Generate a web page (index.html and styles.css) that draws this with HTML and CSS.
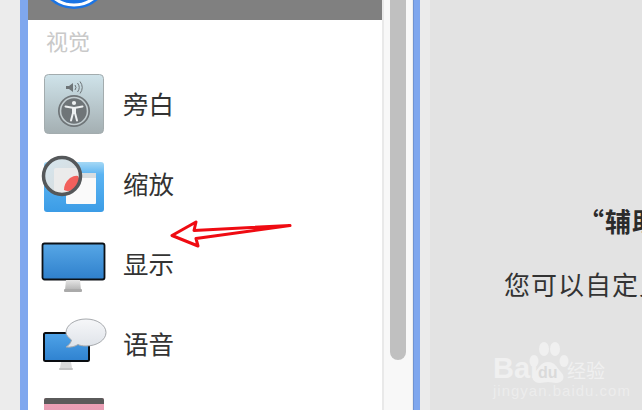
FILE: index.html
```html
<!DOCTYPE html>
<html lang="zh-CN">
<head>
<meta charset="utf-8">
<title>辅助功能</title>
<link rel="stylesheet" href="styles.css">
</head>
<body>
<div class="window">
  <div class="gutter"></div>
  <div class="edge edge-left"></div>
  <div class="list">
    <div class="selected">
      <svg class="selected-icon" width="66" height="20" viewBox="0 0 66 20">
        <circle cx="33" cy="-27" r="36" fill="#1b74e4"/>
        <circle cx="33" cy="-27" r="32" fill="none" stroke="#fff" stroke-width="3"/>
      </svg>
    </div>
    <div class="section">视觉</div>
    <div class="row">
      <svg class="icon" width="66" height="80" viewBox="0 0 66 80">
        <defs>
          <linearGradient id="vo" x1="0" y1="0" x2="0" y2="1"><stop offset="0" stop-color="#cfe3ea"/><stop offset="1" stop-color="#a4afb2"/></linearGradient>
        </defs>
        <rect x="3.500" y="10.500" width="59" height="59" rx="4" fill="url(#vo)" stroke="#a3acae"/>
        <path d="M25 22h3l4-3v9l-4-3h-3z" fill="#6d7477"/>
        <path d="M34 21q2 2.500 0 5M36.500 19q3.500 4.500 0 9M39 17.500q4.500 6 0 12" fill="none" stroke="#6d7477" stroke-width="1"/>
        <circle cx="33" cy="47" r="16" fill="#6f7578"/>
        <circle cx="33" cy="47" r="13.500" fill="none" stroke="#c3cdd0" stroke-width="1.600"/>
        <circle cx="33" cy="39" r="2.100" fill="#eef1f2"/>
        <path d="M24.500 42.500 33 44l8.500-1.500M32 49l-2 7.500M34 49l2 7.500" fill="none" stroke="#eef1f2" stroke-width="2" stroke-linecap="round"/>
        <path d="M33 44v6" fill="none" stroke="#eef1f2" stroke-width="4"/>
      </svg>
      <span class="label">旁白</span>
    </div>
    <div class="row">
      <svg class="icon" width="66" height="80" viewBox="0 0 66 80">
        <defs>
          <linearGradient id="zb" x1="0" y1="0" x2="0" y2="1"><stop offset="0" stop-color="#a5d8f5"/><stop offset=".25" stop-color="#5bb4f2"/><stop offset="1" stop-color="#3b9ce6"/></linearGradient>
          <linearGradient id="zl" x1="0" y1="0" x2="1" y2="1"><stop offset="0" stop-color="#d5e7f0"/><stop offset="1" stop-color="#d8d8d8"/></linearGradient>
          <clipPath id="lens"><circle cx="21" cy="32" r="18"/></clipPath>
        </defs>
        <rect x="3" y="18" width="60" height="50" rx="3" fill="url(#zb)"/>
        <rect x="25" y="29" width="30" height="31" rx="1" fill="#fafafa"/>
        <rect x="25" y="29" width="30" height="5" fill="#d8dde0"/>
        <circle cx="21" cy="32" r="18.500" fill="url(#zl)"/>
        <g clip-path="url(#lens)">
          <rect x="13" y="24" width="34" height="34" rx="2" fill="#ebebeb"/>
          <path d="M23 46q0-7 6-12 5-3 8-2 2 3 1 6-2 6-7 8-4 2-8 0z" fill="#f2605c"/>
        </g>
        <circle cx="21" cy="32" r="18.500" fill="none" stroke="#55585a" stroke-width="3.500"/>
      </svg>
      <span class="label">缩放</span>
    </div>
    <div class="row">
      <svg class="icon" width="66" height="80" viewBox="0 0 66 80">
        <defs>
          <linearGradient id="ds" x1="0" y1="0" x2="0" y2="1"><stop offset="0" stop-color="#57a7e6"/><stop offset="1" stop-color="#2f80cc"/></linearGradient>
          <linearGradient id="st" x1="0" y1="0" x2="0" y2="1"><stop offset="0" stop-color="#e6e6e6"/><stop offset="1" stop-color="#b4b4b4"/></linearGradient>
        </defs>
        <rect x="1.500" y="19.500" width="62" height="36" rx="2" fill="url(#ds)" stroke="#0c1116" stroke-width="1.800"/>
        <path d="M25 56h14l1 10H24z" fill="url(#st)"/>
        <rect x="23" y="65" width="18" height="3" rx="1" fill="#aaa"/>
      </svg>
      <span class="label">显示</span>
    </div>
    <div class="row">
      <svg class="icon" width="66" height="80" viewBox="0 0 66 80">
        <defs>
          <linearGradient id="sp" x1="0" y1="0" x2="0" y2="1"><stop offset="0" stop-color="#4fa3e8"/><stop offset="1" stop-color="#2f82d0"/></linearGradient>
          <linearGradient id="bb" x1="0" y1="0" x2="0" y2="1"><stop offset="0" stop-color="#f6f7f9"/><stop offset="1" stop-color="#dfe3e9"/></linearGradient>
        </defs>
        <rect x="3" y="29" width="45" height="28" rx="1.500" fill="url(#sp)" stroke="#090c10" stroke-width="2"/>
        <path d="M20 58h10l1 6H19z" fill="#d9d9d9"/>
        <rect x="18" y="64" width="14" height="2" rx="1" fill="#c4c4c4"/>
        <path d="M45 15c11 0 20 6 20 13.500S56 42 45 42c-3 0-6-.5-8-1.500-3 2-7 3-12 2.500 3-2 5-4 5.500-7C27 33 25 31 25 28.500 25 21 34 15 45 15z" fill="url(#bb)" stroke="#a6a9ad"/>
      </svg>
      <span class="label">语音</span>
    </div>
    <div class="row">
      <svg class="icon" width="66" height="80" viewBox="0 0 66 80">
        <defs>
          <linearGradient id="pk" x1="0" y1="0" x2="0" y2="1"><stop offset="0" stop-color="#f0a0b4"/><stop offset="1" stop-color="#c99ab8"/></linearGradient>
        </defs>
        <rect x="3" y="14" width="60" height="50" rx="2" fill="url(#pk)"/>
        <path d="M3 20v-4q0-2 2-2h56q2 0 2 2v4z" fill="#5a5a5a"/>
      </svg>
    </div>
  </div>
  <div class="track"><div class="thumb"></div></div>
  <div class="edge edge-right"></div>
  <div class="strip"></div>
  <div class="main">
    <div class="title">“辅助功能”</div>
    <div class="desc">您可以自定义</div>
  </div>
</div>
<svg class="arrow" width="642" height="410" viewBox="0 0 642 410">
  <path d="M290 225.500 194 230.500 196 222 172 235.500 198 246 196 238.500 Z" fill="none" stroke="#ef0b12" stroke-width="3" stroke-linejoin="round"/>
</svg>
<div class="mark">
  <svg class="paw" width="48" height="50" viewBox="0 0 48 50">
    <g fill="#f0f0f0">
      <ellipse cx="7" cy="21" rx="4.500" ry="6"/>
      <ellipse cx="17" cy="9" rx="5" ry="7"/>
      <ellipse cx="28" cy="9" rx="5" ry="7"/>
      <ellipse cx="37" cy="21" rx="4.500" ry="6"/>
      <path d="M21 22c7 0 9 6 13 10 5 5 2 11-5 11-3 0-5-1-8-1s-5 1-8 1c-7 0-10-6-5-11 4-4 6-10 13-10z"/>
    </g>
  </svg>
  <div class="mark-top"><span class="bai">Bai</span><span class="du">du</span><span class="jy">经验</span></div>
  <div class="mark-url">jingyan.baidu.com</div>
</div>
</body>
</html>
```

FILE: styles.css
```css
html, body {
  margin: 0;
  padding: 0;
  width: 642px;
  height: 410px;
  overflow: hidden;
  background: #e3e3e3;
}
body {
  position: relative;
  font-family: "Noto Sans CJK SC", "Noto Sans", sans-serif;
}
.window {
  display: flex;
  height: 410px;
}
.gutter {
  width: 20px;
  background: #ececec;
}
.edge {
  background: #7fa7ee;
}
.edge-left {
  width: 8px;
}
.edge-right {
  width: 7px;
  box-shadow: inset 1px 0 0 #6f93d2;
}
.list {
  width: 354px;
  background: #fff;
  overflow: hidden;
}
.selected {
  height: 20px;
  background: #808080;
  padding-left: 13px;
  overflow: hidden;
}
.selected-icon {
  display: block;
}
.section {
  height: 44px;
  box-sizing: border-box;
  padding: 0 0 4px 18px;
  line-height: 40px;
  font-size: 22px;
  color: #c9c9c9;
}
.row {
  height: 80px;
  display: flex;
  align-items: center;
  gap: 16px;
  padding-left: 13px;
}
.icon {
  display: block;
  flex: none;
}
.label {
  font-size: 25.5px;
  line-height: 36px;
  margin-bottom: 2px;
  color: #333;
}
.track {
  width: 31px;
  box-sizing: border-box;
  padding: 0 6px;
  background: #f8f8f8;
  border-left: 2px solid #e9e9e9;
  border-right: 1px solid #ececec;
}
.thumb {
  width: 16px;
  height: 360px;
  background: #c0c0c0;
  border-radius: 0 0 8px 8px;
}
.strip {
  width: 10px;
  background: #ebebeb;
}
.main {
  flex: 1;
  min-width: 0;
  overflow: hidden;
  padding: 201px 0 0 74px;
  white-space: nowrap;
  color: #2b2b2b;
}
.title {
  height: 40px;
  line-height: 40px;
  margin-left: 74px;
  font-size: 26px;
  letter-spacing: 1px;
  font-weight: 700;
}
.desc {
  margin-top: 23px;
  height: 40px;
  line-height: 40px;
  font-size: 26px;
  letter-spacing: 1px;
  color: #333;
}
.arrow {
  position: absolute;
  left: 0;
  top: 0;
  pointer-events: none;
}
.mark {
  position: absolute;
  left: 493px;
  top: 340px;
  width: 130px;
  color: #f0f0f0;
  font-family: "Liberation Sans", "Noto Sans CJK SC", sans-serif;
}
.paw {
  position: absolute;
  left: 34px;
  top: 0;
}
.mark-top {
  position: relative;
  display: flex;
  align-items: baseline;
  height: 42px;
  padding-top: 12px;
  box-sizing: border-box;
}
.bai {
  font-size: 29px;
  font-weight: 700;
  line-height: 32px;
  width: 45px;
}
.du {
  font-size: 16px;
  font-weight: 700;
  width: 29px;
  color: #dadada;
}
.jy {
  font-family: "Noto Sans CJK SC", sans-serif;
  font-size: 19px;
  line-height: 24px;
}
.mark-url {
  font-size: 15px;
  letter-spacing: 1px;
  line-height: 18px;
  opacity: .75;
}
```
